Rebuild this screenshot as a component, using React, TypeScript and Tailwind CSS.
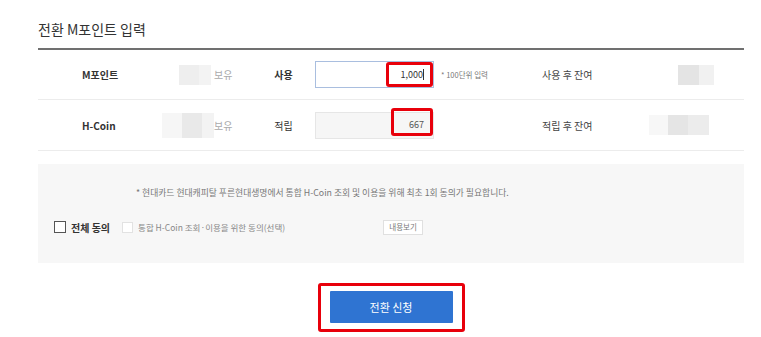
import React from 'react';

const FONT = { fontFamily: '"Noto Sans CJK KR", "Noto Sans", sans-serif' };

// blurred placeholder made of a few grey strips
function Blur({ parts, h = 20 }: { parts: { w: number; c: string }[]; h?: number }) {
  return (
    <div className="flex" style={{ height: h }}>
      {parts.map((p, i) => (
        <div key={i} style={{ width: p.w, background: p.c }} />
      ))}
    </div>
  );
}

export default function App() {
  return (
    <div className="w-[761px] h-[337px] bg-white text-[#333]" style={FONT}>
      <div className="pl-[38px] w-[744px]">
        {/* Title */}
        <div className="pt-[19px] h-[48px] text-[14px] leading-[20px] text-[#333]">전환 M포인트 입력</div>
        <div className="border-t-2 border-[#707070]" />

        {/* Row 1 */}
        <div className="flex items-center h-[50px] border-b border-[#ececec]">
          <div className="pl-[44px] w-[104px] text-[10px] font-bold">M포인트</div>
          <div className="w-[69px] flex justify-end">
            <Blur parts={[{ w: 20, c: '#eeeeee' }, { w: 12, c: '#f3f3f3' }]} />
          </div>
          <div className="w-[51px] pl-[3px] text-[10px] text-[#aaa]">보유</div>
          <div className="w-[43px] text-center text-[10px] font-bold">사용</div>
          <div className="relative ml-[10px] w-[119px] h-[27px] border border-[#a9bedf] bg-white flex items-center justify-end pr-[9px] text-[9px] text-[#333]">
            1,000<span className="w-px h-[11px] bg-[#333]" />
            <div className="absolute left-[70px] top-[0px] w-[47px] h-[25px] border-[3px] border-[#e8000b] rounded-[3px]" />
          </div>
          <div className="ml-[7px] w-[101px] text-[7.5px] text-[#777]">* 100단위 입력</div>
          <div className="w-[100px] text-[10px] text-[#444]">사용 후 잔여</div>
          <div className="ml-[36px]">
            <Blur parts={[{ w: 21, c: '#e4e4e4' }, { w: 15, c: '#f1f1f1' }]} />
          </div>
        </div>

        {/* Row 2 */}
        <div className="flex items-center h-[51px] border-b border-[#ececec]">
          <div className="pl-[44px] w-[104px] text-[10px] font-bold">H-Coin</div>
          <div className="w-[72px] flex justify-end">
            <Blur h={25} parts={[{ w: 20, c: '#f6f6f6' }, { w: 20, c: '#e9e9e9' }, { w: 12, c: '#f3f3f3' }]} />
          </div>
          <div className="w-[48px] text-[10px] text-[#aaa]">보유</div>
          <div className="w-[43px] text-center text-[10px] text-[#333]">적립</div>
          <div className="relative ml-[10px] w-[119px] h-[27px] border border-[#e6e6e6] bg-[#f6f6f6] flex items-center justify-end pr-[9px] text-[9px] text-[#555]">
            667
            <div className="absolute left-[75px] top-[-5px] w-[42px] h-[28px] border-[3px] border-[#e8000b] rounded-[3px]" />
          </div>
          <div className="ml-[7px] w-[101px]" />
          <div className="w-[100px] text-[10px] text-[#444]">적립 후 잔여</div>
          <div className="ml-[7px]">
            <Blur parts={[{ w: 19, c: '#f7f7f7' }, { w: 20, c: '#e5e5e5' }, { w: 21, c: '#ececec' }]} />
          </div>
        </div>

        {/* Agreement box */}
        <div className="mt-[13px] h-[99px] bg-[#f7f7f7] flex flex-col">
          <div className="pt-[23px] pl-[98px] text-[8.8px] leading-[12px] text-[#777]">
            * 현대카드 현대캐피탈 푸른현대생명에서 통합 H-Coin 조회 및 이용을 위해 최초 1회 동의가 필요합니다.
          </div>
          <div className="mt-[20px] flex items-center h-[16px]">
            <div className="ml-[16px] w-[12px] h-[12px] border-[1.5px] border-[#555] bg-white" />
            <div className="ml-[5px] text-[10px] font-bold text-[#333]">전체 동의</div>
            <div className="ml-[12px] w-[11px] h-[11px] border border-[#e2e2e2] bg-white" />
            <div className="ml-[5px] w-[245px] text-[8.5px] text-[#888]">통합 H-Coin 조회·이용을 위한 동의(선택)</div>
            <div className="w-[40px] h-[15px] border border-[#e0e0e0] bg-white flex items-center justify-center text-[7.5px] text-[#777]">
              내용보기
            </div>
          </div>
        </div>

        {/* Submit */}
        <div className="mt-[20px] flex justify-center">
          <div className="w-[147px] h-[49px] border-[3px] border-[#e8000b] rounded-[3px] px-[9px] pt-[5px]">
            <div className="h-[32px] bg-[#2f74d2] rounded-[1px] flex items-center justify-center text-[11px] text-white">
              전환 신청
            </div>
          </div>
        </div>
      </div>
    </div>
  );
}
